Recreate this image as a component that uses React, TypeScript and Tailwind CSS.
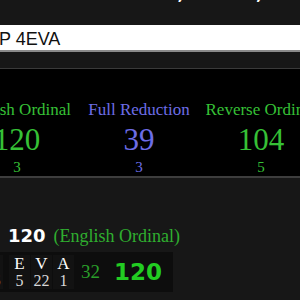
const serif = "font-['Liberation_Serif',serif]";

type Cipher = { name: string; value: number; reduced: number; color: string };

const ciphers: Cipher[] = [
  { name: "English Ordinal", value: 120, reduced: 3, color: "text-[#36c136]" },
  { name: "Full Reduction", value: 39, reduced: 3, color: "text-[#6d6de6]" },
  { name: "Reverse Ordinal", value: 104, reduced: 5, color: "text-[#36c136]" },
];

const letters = [
  { ch: "E", v: 5 },
  { ch: "V", v: 22 },
  { ch: "A", v: 1 },
];

export default function App() {
  return (
    <div className="h-[300px] w-[300px] overflow-hidden bg-[#171717]">
      <div className="h-[25px] overflow-hidden">
        <div className="-mt-[19px] ml-[52px] whitespace-nowrap font-['DejaVu_Sans',sans-serif] text-[17px] font-bold text-white">
          Enter a Word, Phrase, or Number
        </div>
      </div>

      <div className="h-[27px] overflow-hidden whitespace-nowrap border-b-2 border-[#8a8a8a] bg-white pt-[4px] font-['Liberation_Sans',sans-serif] text-[18px] leading-[20px] text-[#111]">
        <span className="-ml-[14px] inline-block">UP 4EVA</span>
      </div>

      <div className="h-[17px] border-b border-[#3a3a3a]" />

      <div className="flex h-[109px] border-b-2 border-[#3d3d3d] bg-black pt-[31px]">
        <div className="-ml-[44px] flex">
          {ciphers.map((c) => (
            <div key={c.name} className={`flex w-[122px] shrink-0 flex-col items-center ${serif} ${c.color}`}>
              <div className="whitespace-nowrap text-[17px] leading-[20px]">{c.name}</div>
              <div className="mt-[2px] text-[31px] leading-[36px]">{c.value}</div>
              <div className="text-[15px] leading-[18px]">{c.reduced}</div>
            </div>
          ))}
        </div>
      </div>

      <div className="mt-[44px] flex items-baseline gap-[8px] pl-[8px]">
        <span className="font-['DejaVu_Sans',sans-serif] text-[18px] font-bold text-white">120</span>
        <span className={`${serif} text-[18px] text-[#2fae2f]`}>(English Ordinal)</span>
      </div>

      <div className="mt-[2px] flex h-[40px] w-[173px] items-center bg-[#0d0d0d]">
        <div className="flex">
          <div className={`-ml-[18px] mr-[6px] flex w-[21px] flex-col items-center bg-[#121212] ${serif}`}>
            <span className="text-[17px] leading-[18px] text-white">P</span>
            <span className="text-[16px] leading-[16px] text-[#d8d8d8]">16</span>
          </div>
          <div className="flex gap-[1px]">
            {letters.map((l) => (
              <div key={l.ch} className={`flex w-[21px] flex-col items-center bg-[#121212] ${serif}`}>
                <span className="text-[17px] leading-[18px] text-white">{l.ch}</span>
                <span className="text-[16px] leading-[16px] text-[#d8d8d8]">{l.v}</span>
              </div>
            ))}
          </div>
        </div>
        <span className={`ml-[7px] ${serif} text-[19px] text-[#2a9e2a]`}>32</span>
        <span className="ml-[14px] font-['DejaVu_Sans',sans-serif] text-[23px] font-bold text-[#22cc22]">120</span>
      </div>
    </div>
  );
}
